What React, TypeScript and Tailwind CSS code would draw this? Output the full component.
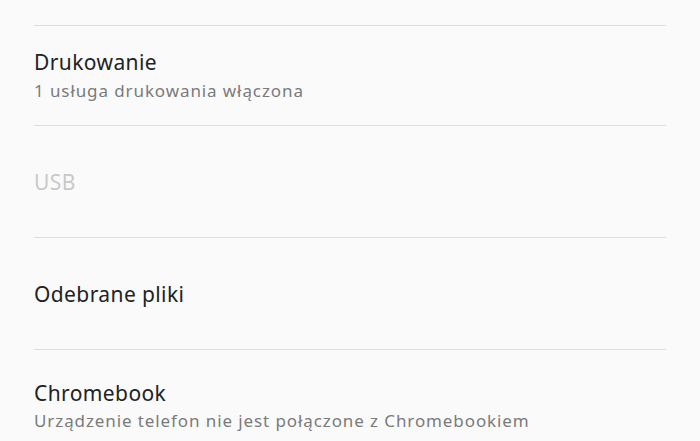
import React from "react";

export default function App() {
  const font = { fontFamily: '"Noto Sans", "Open Sans", sans-serif' };
  return (
    <div className="w-[700px] h-[441px] overflow-hidden bg-[#fafafa]" style={font}>
      <div className="px-[34px]">
        <div className="h-[25px]" />
        <div className="h-[100px] border-t border-[#dedede] pt-[22px]">
          <div className="text-[21px] leading-[28px] tracking-[0.4px] text-[#222222]">Drukowanie</div>
          <div className="mt-[3px] text-[17px] leading-[24px] tracking-[0.9px] text-[#7b7b7b]">1 usługa drukowania włączona</div>
        </div>
        <div className="h-[112px] border-t border-[#dedede] flex items-center">
          <div className="text-[21px] leading-[28px] tracking-[0.4px] text-[#c9c9c9]">USB</div>
        </div>
        <div className="h-[112px] border-t border-[#dedede] flex items-center">
          <div className="text-[21px] leading-[28px] tracking-[0.4px] text-[#222222]">Odebrane pliki</div>
        </div>
        <div className="border-t border-[#dedede] pt-[29px]">
          <div className="text-[21px] leading-[28px] tracking-[0.4px] text-[#222222]">Chromebook</div>
          <div className="mt-[2px] text-[17px] leading-[24px] tracking-[0.9px] text-[#7b7b7b]">Urządzenie telefon nie jest połączone z Chromebookiem</div>
        </div>
      </div>
    </div>
  );
}
